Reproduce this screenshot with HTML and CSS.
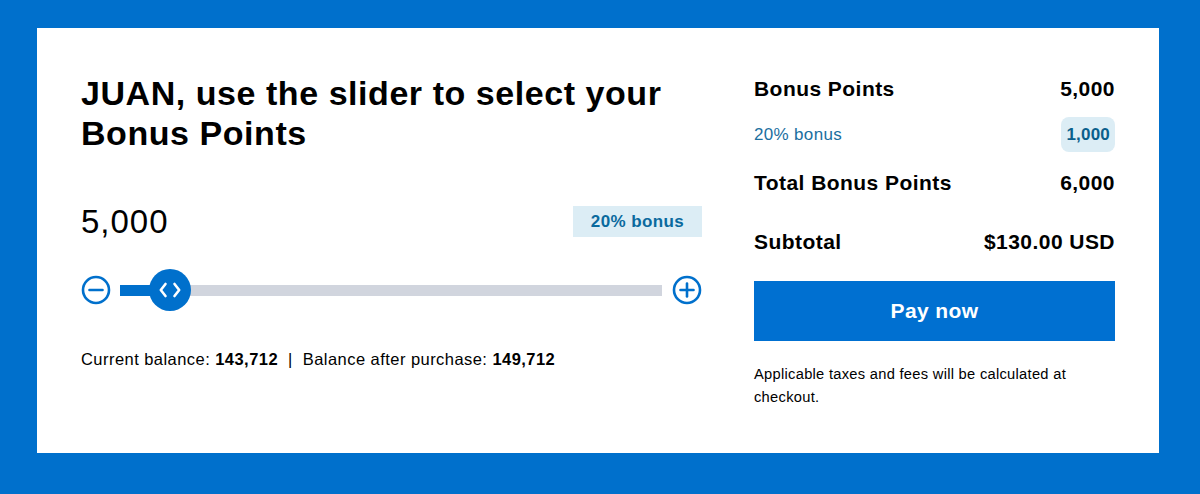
FILE: index.html
```html
<!DOCTYPE html>
<html>
<head>
<meta charset="utf-8">
<link rel="stylesheet" href="styles.css">
</head>
<body>
<div class="card">
  <div class="left">
    <h1 class="title">JUAN, use the slider to select your Bonus Points</h1>
    <div class="amount-row">
      <div class="amount">5,000</div>
      <div class="badge">20% bonus</div>
    </div>
    <div class="slider">
      <svg class="step" width="30" height="30" viewBox="0 0 30 30">
        <circle cx="15" cy="15" r="13" fill="none" stroke="#0070cc" stroke-width="2.6"/>
        <line x1="8.5" y1="15" x2="21.5" y2="15" stroke="#0070cc" stroke-width="2.6" stroke-linecap="round"/>
      </svg>
      <div class="track">
        <div class="fill"></div>
        <div class="thumb">
          <svg width="24" height="20" viewBox="0 0 24 20">
            <path d="M7.5 4 L2.8 10 L7.5 16" fill="none" stroke="#fff" stroke-width="2.6" stroke-linecap="round" stroke-linejoin="round"/>
            <path d="M16.5 4 L21.2 10 L16.5 16" fill="none" stroke="#fff" stroke-width="2.6" stroke-linecap="round" stroke-linejoin="round"/>
          </svg>
        </div>
      </div>
      <svg class="step" width="30" height="30" viewBox="0 0 30 30">
        <circle cx="15" cy="15" r="13" fill="none" stroke="#0070cc" stroke-width="2.6"/>
        <line x1="8.5" y1="15" x2="21.5" y2="15" stroke="#0070cc" stroke-width="2.6" stroke-linecap="round"/>
        <line x1="15" y1="8.5" x2="15" y2="21.5" stroke="#0070cc" stroke-width="2.6" stroke-linecap="round"/>
      </svg>
    </div>
    <p class="balance">Current balance: <b>143,712</b><span class="sep">|</span>Balance after purchase: <b>149,712</b></p>
  </div>
  <div class="right">
    <div class="row row-main"><span>Bonus Points</span><span>5,000</span></div>
    <div class="row row-bonus"><span>20% bonus</span><span class="pill">1,000</span></div>
    <div class="row row-main row-total"><span>Total Bonus Points</span><span>6,000</span></div>
    <div class="row row-main row-sub"><span>Subtotal</span><span>$130.00 USD</span></div>
    <button class="pay">Pay now</button>
    <p class="note">Applicable taxes and fees will be calculated at checkout.</p>
  </div>
</div>
</body>
</html>
```

FILE: styles.css
```css
html, body {
  margin: 0;
  padding: 0;
}
body {
  background: #0070cc;
  width: 1200px;
  height: 494px;
  padding: 28px 41px 41px 37px;
  box-sizing: border-box;
  font-family: "Liberation Sans", Arial, sans-serif;
  color: #000;
}
.card {
  background: #fff;
  height: 425px;
  box-sizing: border-box;
  padding: 44px 44px 0 44px;
  display: flex;
  gap: 52px;
}
.left {
  width: 621px;
  flex: none;
}
.right {
  flex: 1;
}
.title {
  margin: 1px 0 0;
  font-size: 34px;
  line-height: 40px;
  font-weight: bold;
  letter-spacing: 0.55px;
}
.amount-row {
  margin-top: 53px;
  height: 31px;
  display: flex;
  align-items: center;
  justify-content: space-between;
}
.amount {
  font-size: 33px;
  line-height: 31px;
  letter-spacing: 1px;
}
.badge {
  background: #dcedf5;
  color: #0a6a9e;
  font-weight: bold;
  font-size: 17px;
  letter-spacing: 0.4px;
  height: 31px;
  line-height: 31px;
  width: 129px;
  text-align: center;
}
.slider {
  margin-top: 32px;
  height: 42px;
  display: flex;
  align-items: center;
}
.step {
  display: block;
  flex: none;
}
.track {
  flex: 1;
  height: 11px;
  background: #d1d5de;
  margin: 0 10px 0 9px;
  position: relative;
}
.fill {
  width: 50px;
  height: 100%;
  background: #0070cc;
}
.thumb {
  position: absolute;
  left: 29px;
  top: -16px;
  width: 42px;
  height: 42px;
  border-radius: 50%;
  background: #0070cc;
  display: flex;
  align-items: center;
  justify-content: center;
}
.thumb svg {
  display: block;
}
.balance {
  margin: 38px 0 0;
  font-size: 16.5px;
  letter-spacing: 0.45px;
  line-height: 20px;
}
.sep {
  margin: 0 10px;
}
.row {
  display: flex;
  justify-content: space-between;
  align-items: center;
}
.row-main {
  font-size: 21px;
  letter-spacing: 0.45px;
  font-weight: bold;
  height: 34px;
}
.row-bonus {
  margin-top: 11px;
  height: 35px;
  font-size: 17px;
  letter-spacing: 0.33px;
  color: #1b6f9f;
}
.pill {
  background: #dcedf5;
  color: #0a5f8c;
  font-weight: bold;
  border-radius: 8px;
  height: 35px;
  line-height: 35px;
  padding: 0 5px;
  letter-spacing: 0.2px;
}
.row-total {
  margin-top: 14px;
}
.row-sub {
  margin-top: 25px;
}
.pay {
  display: block;
  width: 100%;
  margin-top: 22px;
  height: 60px;
  border: none;
  background: #0070d1;
  color: #fff;
  font-family: inherit;
  font-size: 21px;
  letter-spacing: 0.4px;
  font-weight: bold;
  padding: 0;
}
.note {
  margin: 22px 0 0;
  font-size: 14.7px;
  letter-spacing: 0.28px;
  line-height: 23px;
}
```
